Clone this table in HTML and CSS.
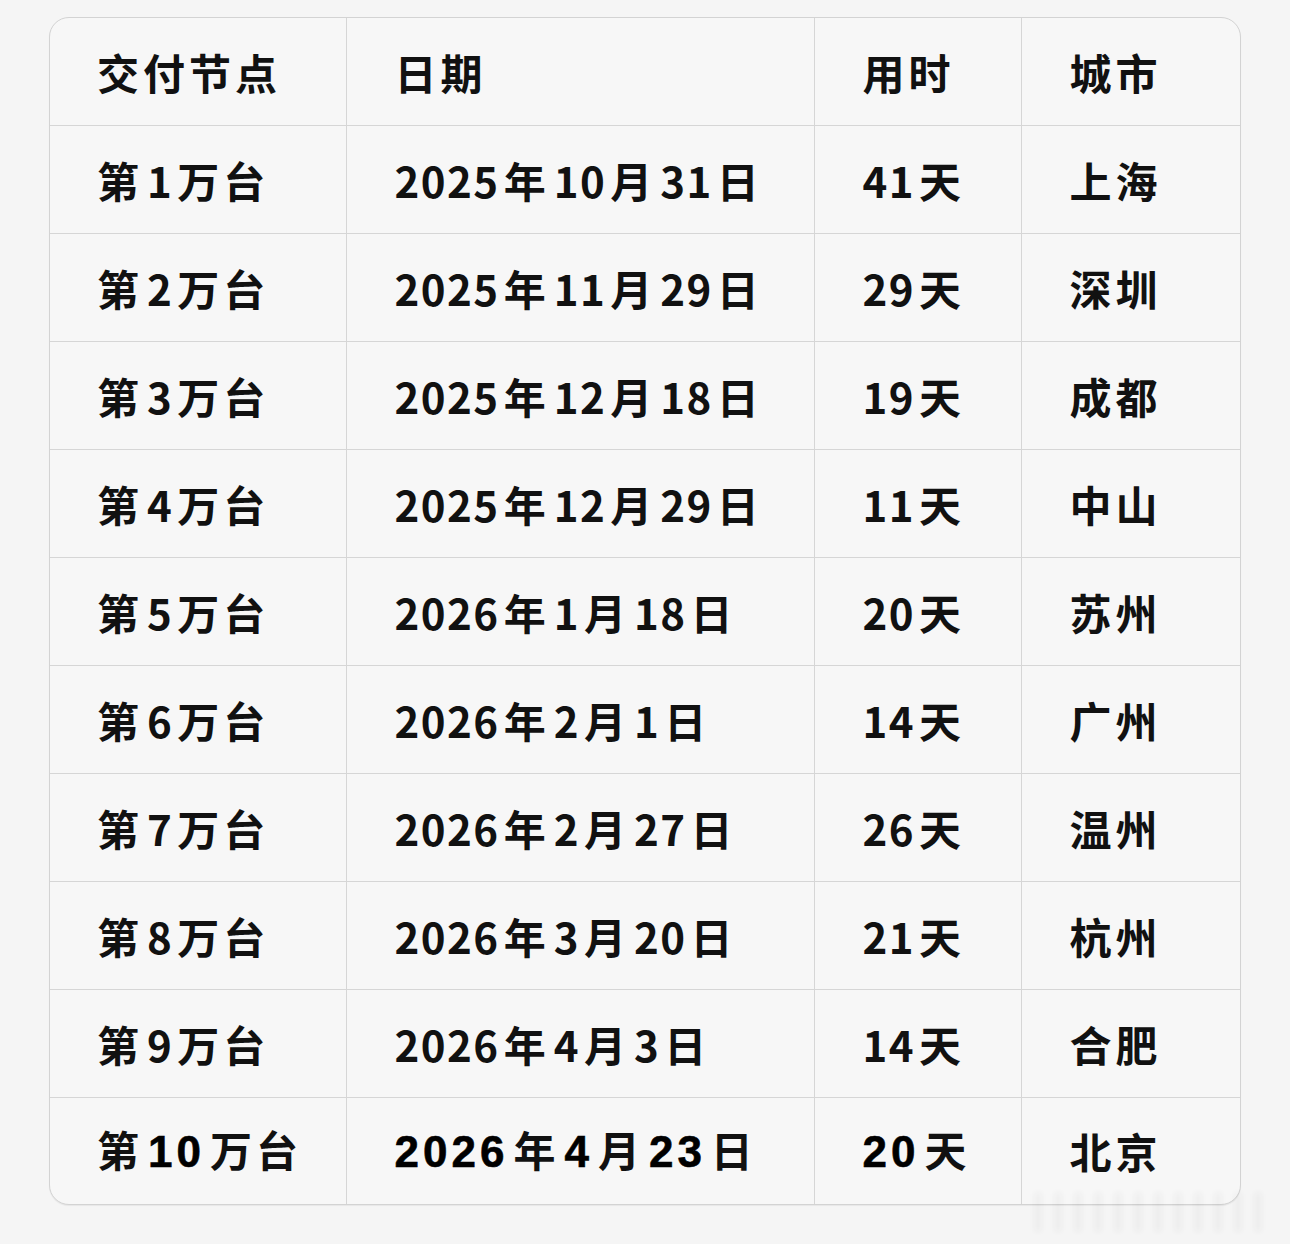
FILE: index.html
```html
<!DOCTYPE html>
<html lang="zh-CN">
<head>
<meta charset="utf-8">
<title>交付节点</title>
<link rel="stylesheet" href="styles.css">
</head>
<body>
<div class="page">
  <div class="card">
    <table class="grid">
      <colgroup>
        <col class="c1"><col class="c2"><col class="c3"><col class="c4">
      </colgroup>
      <thead>
        <tr><th>交付节点</th><th>日期</th><th>用时</th><th>城市</th></tr>
      </thead>
      <tbody>
        <tr><td>第<span class="d">1</span>万台</td><td><span class="d lead">2025</span>年<span class="d">10</span>月<span class="d">31</span>日</td><td><span class="d lead">41</span>天</td><td>上海</td></tr>
        <tr><td>第<span class="d">2</span>万台</td><td><span class="d lead">2025</span>年<span class="d">11</span>月<span class="d">29</span>日</td><td><span class="d lead">29</span>天</td><td>深圳</td></tr>
        <tr><td>第<span class="d">3</span>万台</td><td><span class="d lead">2025</span>年<span class="d">12</span>月<span class="d">18</span>日</td><td><span class="d lead">19</span>天</td><td>成都</td></tr>
        <tr><td>第<span class="d">4</span>万台</td><td><span class="d lead">2025</span>年<span class="d">12</span>月<span class="d">29</span>日</td><td><span class="d lead">11</span>天</td><td>中山</td></tr>
        <tr><td>第<span class="d">5</span>万台</td><td><span class="d lead">2026</span>年<span class="d">1</span>月<span class="d">18</span>日</td><td><span class="d lead">20</span>天</td><td>苏州</td></tr>
        <tr><td>第<span class="d">6</span>万台</td><td><span class="d lead">2026</span>年<span class="d">2</span>月<span class="d">1</span>日</td><td><span class="d lead">14</span>天</td><td>广州</td></tr>
        <tr><td>第<span class="d">7</span>万台</td><td><span class="d lead">2026</span>年<span class="d">2</span>月<span class="d">27</span>日</td><td><span class="d lead">26</span>天</td><td>温州</td></tr>
        <tr><td>第<span class="d">8</span>万台</td><td><span class="d lead">2026</span>年<span class="d">3</span>月<span class="d">20</span>日</td><td><span class="d lead">21</span>天</td><td>杭州</td></tr>
        <tr><td>第<span class="d">9</span>万台</td><td><span class="d lead">2026</span>年<span class="d">4</span>月<span class="d">3</span>日</td><td><span class="d lead">14</span>天</td><td>合肥</td></tr>
        <tr class="last"><td>第<span class="d b">10</span>万台</td><td><span class="d b lead">2026</span>年<span class="d b">4</span>月<span class="d b">23</span>日</td><td><span class="d b lead">20</span>天</td><td>北京</td></tr>
      </tbody>
    </table>
  </div>
  <div class="watermark"></div>
</div>
</body>
</html>
```
FILE: styles.css
```css
html, body {
  margin: 0;
  padding: 0;
  background: #f5f5f5;
}
.page {
  position: relative;
  width: 1290px;
  height: 1244px;
  padding: 17px 0 0 49px;
  box-sizing: border-box;
}
.card {
  width: 1192px;
  box-sizing: border-box;
  border: 1px solid #d3d3d3;
  border-radius: 20px;
  overflow: hidden;
  background: #f7f7f7;
  box-shadow: 0 1px 1px rgba(0,0,0,0.06);
}
.grid {
  width: 100%;
  border-collapse: collapse;
  table-layout: fixed;
  font-family: "Noto Sans CJK SC", "Noto Sans", sans-serif;
  font-size: 42px;
  font-weight: 700;
  color: #111;
  letter-spacing: 4px;
}
.c1 { width: 296px; }
.c2 { width: 468px; }
.c3 { width: 207px; }
.c4 { width: auto; }
.grid th, .grid td {
  height: 107px;
  padding: 0 0 0 48px;
  text-align: left;
  vertical-align: middle;
  font-weight: 700;
  border-right: 1px solid #d6d6d6;
  border-bottom: 1px solid #d6d6d6;
  white-space: nowrap;
  line-height: 1;
}
.grid th:first-child, .grid td:first-child { padding-left: 47px; }
.grid th:last-child, .grid td:last-child { border-right: none; }
.grid tr.last td { border-bottom: none; height: 106px; }
.d {
  letter-spacing: 1.5px;
  margin: 0 4px 0 4px;
}
.d.lead { margin-left: 0; }
.d.b {
  font-family: "Liberation Sans", Arial, sans-serif;
  font-weight: 700;
  font-size: 44px;
  letter-spacing: 4px;
  margin: 0 5px 0 5px;
  color: #000;
  -webkit-text-stroke: 0.6px #000;
}
.d.b.lead { margin-left: 0; }
.watermark {
  position: absolute;
  left: 1034px;
  top: 1192px;
  width: 236px;
  height: 40px;
  background: repeating-linear-gradient(90deg, rgba(0,0,0,0.045) 0 8px, rgba(0,0,0,0) 8px 20px);
  filter: blur(3px);
  opacity: 0.8;
}
```
